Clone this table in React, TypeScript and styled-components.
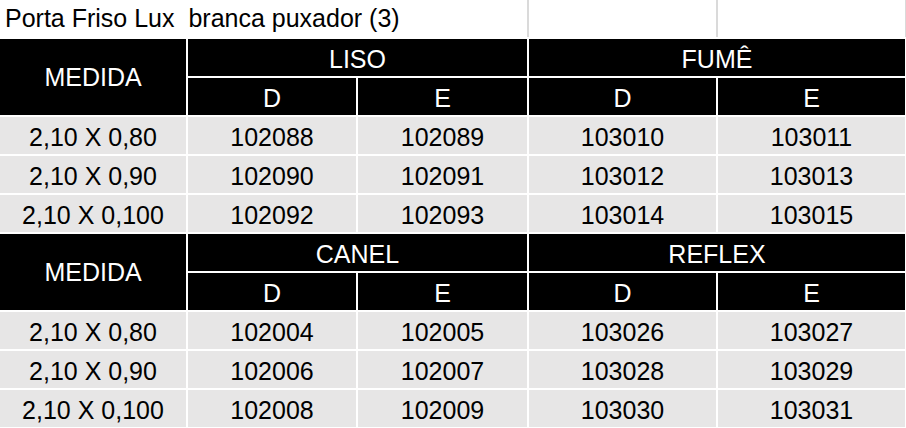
import React from 'react';
import styled, { createGlobalStyle } from 'styled-components';

const GlobalStyle = createGlobalStyle`
  html, body {
    margin: 0;
    padding: 0;
    background: #ffffff;
  }
  body {
    font-family: "Liberation Sans", Arial, sans-serif;
  }
`;

const COLUMNS = '186px 168px 169px 187px 187px';

const Sheet = styled.div`
  width: 906px;
  display: flex;
  flex-direction: column;
  gap: 2px;
  background: #ffffff;
`;

const TitleRow = styled.div`
  display: grid;
  grid-template-columns: ${COLUMNS};
  grid-auto-rows: 37px;
  column-gap: 2px;
  width: 905px;
  background: #dadada;
  border-right: 1px solid #dadada;
`;

const TitleCell = styled.div<{ $span?: number }>`
  grid-column: span ${(p) => p.$span || 1};
  background: #ffffff;
  color: #000000;
  font-size: 25px;
  line-height: 37px;
  padding-left: 5px;
  white-space: pre;
`;

const Block = styled.div`
  display: grid;
  grid-template-columns: ${COLUMNS};
  grid-auto-rows: 37px;
  gap: 2px;
  width: 905px;
`;

const Cell = styled.div<{ $head?: boolean; $rows?: number; $cols?: number; $flat?: boolean }>`
  grid-row: span ${(p) => p.$rows || 1};
  grid-column: span ${(p) => p.$cols || 1};
  display: flex;
  align-items: center;
  justify-content: center;
  padding-top: ${(p) => (p.$flat ? 0 : 3)}px;
  box-sizing: border-box;
  background: ${(p) => (p.$head ? '#000000' : '#e7e6e6')};
  color: ${(p) => (p.$head ? '#ffffff' : '#000000')};
  font-size: 25px;
  white-space: nowrap;
`;

type Table = {
  groups: [string, string];
  rows: { size: string; codes: string[] }[];
};

const tables: Table[] = [
  {
    groups: ['LISO', 'FUMÊ'],
    rows: [
      { size: '2,10 X 0,80', codes: ['102088', '102089', '103010', '103011'] },
      { size: '2,10 X 0,90', codes: ['102090', '102091', '103012', '103013'] },
      { size: '2,10 X 0,100', codes: ['102092', '102093', '103014', '103015'] },
    ],
  },
  {
    groups: ['CANEL', 'REFLEX'],
    rows: [
      { size: '2,10 X 0,80', codes: ['102004', '102005', '103026', '103027'] },
      { size: '2,10 X 0,90', codes: ['102006', '102007', '103028', '103029'] },
      { size: '2,10 X 0,100', codes: ['102008', '102009', '103030', '103031'] },
    ],
  },
];

const PriceBlock: React.FC<{ table: Table }> = ({ table }) => (
  <Block>
    <Cell $head $rows={2} $flat>MEDIDA</Cell>
    <Cell $head $cols={2}>{table.groups[0]}</Cell>
    <Cell $head $cols={2}>{table.groups[1]}</Cell>
    <Cell $head>D</Cell>
    <Cell $head>E</Cell>
    <Cell $head>D</Cell>
    <Cell $head>E</Cell>
    {table.rows.map((row) => (
      <React.Fragment key={row.size}>
        <Cell>{row.size}</Cell>
        {row.codes.map((code) => (
          <Cell key={code}>{code}</Cell>
        ))}
      </React.Fragment>
    ))}
  </Block>
);

const App: React.FC = () => {
  return (
    <>
      <GlobalStyle />
      <Sheet>
        <TitleRow>
          <TitleCell $span={3}>{'Porta Friso Lux  branca puxador (3)'}</TitleCell>
          <TitleCell />
          <TitleCell />
        </TitleRow>
        {tables.map((t) => (
          <PriceBlock key={t.groups[0]} table={t} />
        ))}
      </Sheet>
    </>
  );
};

export default App;
